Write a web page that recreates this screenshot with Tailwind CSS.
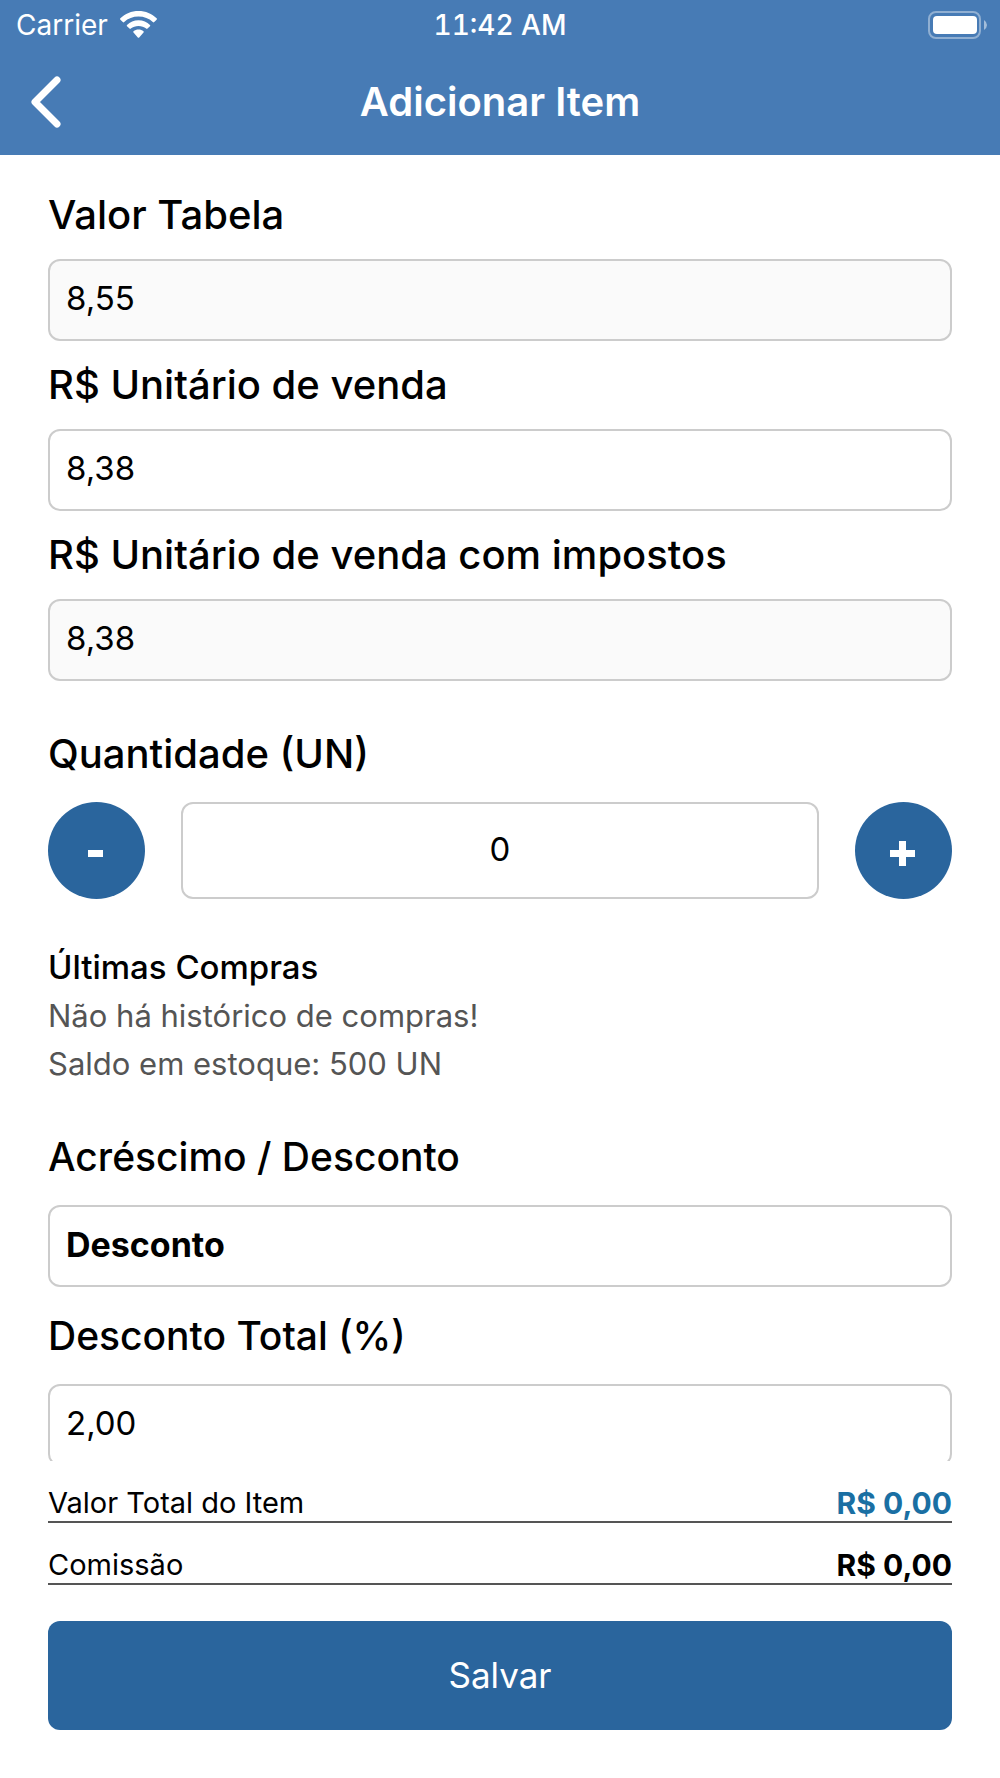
<!DOCTYPE html>
<html lang="pt-BR">
<head>
    <meta charset="UTF-8">
    <meta name="viewport" content="width=device-width, initial-scale=1.0">
    <title>Adicionar Item</title>
    <script src="https://cdn.jsdelivr.net/npm/@tailwindcss/browser@4"></script>
</head>
<body class="h-screen flex flex-col bg-white text-black font-['Inter',sans-serif]">
    <header class="shrink-0 bg-[#477bb5] text-white">
        <!-- Status bar -->
        <div class="grid grid-cols-3 items-center h-[50px] px-4 text-[28px] leading-[32px]">
            <div class="flex items-center gap-3">
                <span>Carrier</span>
                <svg class="w-[37px] h-[28px]" viewBox="0 0 37 28" fill="currentColor">
                    <path d="M18.500 0 C25.600 0 32 2.700 36.600 7.300 Q37.300 8 36.600 8.700 L34.200 11.100 Q33.500 11.700 32.800 11 C29 7.600 24 5.600 18.500 5.600 C13 5.600 8 7.600 4.200 11 Q3.500 11.700 2.800 11.100 L.4 8.700 Q-.3 8 .4 7.300 C5 2.700 11.400 0 18.500 0Z"/>
                    <path d="M18.500 9.300 C23 9.300 27 11 30 13.900 Q30.600 14.500 30 15.200 L27.500 17.600 Q26.900 18.200 26.200 17.600 C24.100 15.900 21.500 14.900 18.500 14.900 C15.500 14.900 12.900 15.900 10.800 17.600 Q10.100 18.200 9.500 17.600 L7 15.200 Q6.400 14.500 7 13.900 C10 11 14 9.300 18.500 9.300Z"/>
                    <path d="M18.500 18.600 C20.400 18.600 22.100 19.200 23.500 20.300 Q24.200 20.900 23.500 21.600 L19.200 26.400 Q18.500 27.100 17.800 26.400 L13.500 21.600 Q12.800 20.900 13.500 20.300 C14.900 19.200 16.600 18.600 18.500 18.600Z"/>
                </svg>
            </div>
            <span class="text-center font-medium tabular-nums">11:42 AM</span>
            <svg class="justify-self-end w-[56px] h-[28px] overflow-visible" viewBox="0 0 56 28" fill="none">
                <rect x="1" y="1" width="51" height="26" rx="7" stroke="white" stroke-opacity=".4" stroke-width="2"/>
                <rect x="5" y="5" width="44" height="18" rx="4" fill="white"/>
                <path d="M56 9 Q59 11 59 14 Q59 17 56 19Z" fill="white" fill-opacity=".5"/>
            </svg>
        </div>
        <div class="grid grid-cols-[1fr_auto_1fr] items-center h-[105px] px-[30px] pb-[2px]">
            <button type="button" aria-label="Voltar" class="justify-self-start">
                <svg class="w-[32px] h-[52px]" viewBox="0 0 32 52" fill="none" stroke="currentColor" stroke-width="7" stroke-linecap="round" stroke-linejoin="round">
                    <path d="M27 4 L5 26 L27 48"/>
                </svg>
            </button>
            <h1 class="text-[40px] leading-[48px] font-semibold">Adicionar Item</h1>
        </div>
    </header>

    <main class="flex-1 min-h-0 overflow-y-auto [scrollbar-width:none] px-12 pt-9">
        <form id="item-form">
            <label for="valor-tabela" class="block mb-5 text-[40px] leading-[48px] font-medium">Valor Tabela</label>
            <input id="valor-tabela" type="text" value="8,55" readonly class="block w-full h-[82px] mb-5 px-4 pb-1 border-2 border-[#cccccc] rounded-xl bg-[#fafafa] text-[33px]">

            <label for="valor-venda" class="block mb-5 text-[40px] leading-[48px] font-medium">R$ Unitário de venda</label>
            <input id="valor-venda" type="text" value="8,38" class="block w-full h-[82px] mb-5 px-4 pb-1 border-2 border-[#cccccc] rounded-xl bg-white text-[33px]">

            <label for="valor-impostos" class="block mb-5 text-[40px] leading-[48px] font-medium">R$ Unitário de venda com impostos</label>
            <input id="valor-impostos" type="text" value="8,38" readonly class="block w-full h-[82px] mb-[49px] px-4 pb-1 border-2 border-[#cccccc] rounded-xl bg-[#fafafa] text-[33px]">

            <label for="quantidade" class="block mb-6 text-[40px] leading-[48px] font-medium">Quantidade (UN)</label>
            <div class="flex items-center gap-9 mb-11">
                <button type="button" aria-label="Diminuir" class="flex items-center justify-center shrink-0 size-[97px] rounded-full bg-[#2a659d] text-white">
                    <svg class="size-[32px]" viewBox="0 0 32 32" fill="currentColor"><path d="M7 15h15v7H7z"/></svg>
                </button>
                <input id="quantidade" type="text" value="0" class="flex-1 min-w-0 h-[97px] px-4 pb-1 border-2 border-[#cccccc] rounded-xl bg-white text-center text-[33px]">
                <button type="button" aria-label="Aumentar" class="flex items-center justify-center shrink-0 size-[97px] rounded-full bg-[#2a659d] text-white">
                    <svg class="size-[32px]" viewBox="0 0 32 32" fill="currentColor"><path d="M2 15h9V6h7v9h9v7h-9v9h-7v-9H2z"/></svg>
                </button>
            </div>

            <section class="mb-[45px] text-[31px] leading-[48px] text-[#555555]">
                <h2 class="mb-px text-[33px] leading-[48px] font-medium text-black">Últimas Compras</h2>
                <p>Não há histórico de compras!</p>
                <p>Saldo em estoque: 500 UN</p>
            </section>

            <label for="tipo" class="block mb-6 text-[39px] leading-[48px] font-medium">Acréscimo / Desconto</label>
            <select id="tipo" class="block appearance-none w-full h-[82px] mb-[25px] px-4 pb-1 border-2 border-[#cccccc] rounded-xl bg-white text-[34px] font-bold">
                <option>Desconto</option>
                <option>Acréscimo</option>
            </select>

            <label for="desconto-total" class="block mb-6 text-[39px] leading-[48px] font-medium">Desconto Total (%)</label>
            <input id="desconto-total" type="text" value="2,00" class="block w-full h-[82px] mb-5 px-4 pb-1 border-2 border-[#cccccc] rounded-xl bg-white text-[33px]">
        </form>
    </main>

    <footer class="shrink-0 px-12 pt-6 pb-12">
        <dl class="leading-[36px]">
            <div class="flex justify-between border-b-2 border-[#555555]">
                <dt class="text-[29px]">Valor Total do Item</dt>
                <dd class="text-[30px] font-bold text-[#1a6fa3]">R$ 0,00</dd>
            </div>
            <div class="flex justify-between mt-6 border-b-2 border-[#555555]">
                <dt class="text-[29px]">Comissão</dt>
                <dd class="text-[30px] font-bold">R$ 0,00</dd>
            </div>
        </dl>
        <button type="submit" form="item-form" class="block w-full h-[109px] mt-9 rounded-xl bg-[#2a659d] text-white text-[35px]">Salvar</button>
    </footer>
</body>
</html>
